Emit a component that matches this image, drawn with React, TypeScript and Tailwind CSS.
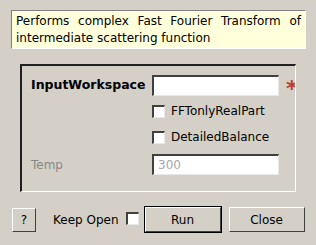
const sunken =
  "shrink-0 bg-white border-t-2 border-l-2 border-t-[#404040] border-l-[#404040] border-r border-b border-r-[#e8e8e8] border-b-[#e8e8e8]";
const raised =
  "shrink-0 border-t border-l border-white border-r border-b border-r-[#404040] border-b-[#404040] flex items-center justify-center";

function CheckRow({ label, className }: { label: string; className: string }) {
  return (
    <div className={`flex items-center h-[20px] ${className}`}>
      <div className="w-[121px] shrink-0" />
      <div className={`w-[13px] h-[13px] ${sunken}`} />
      <span className="ml-[6px]">{label}</span>
    </div>
  );
}

export default function App() {
  return (
    <div
      className="w-[316px] h-[245px] bg-[#d4d0c8] text-[12px] text-black flex flex-col pt-[10px] overflow-hidden"
      style={{ fontFamily: '"DejaVu Sans", sans-serif' }}
    >
      {/* description */}
      <div className="ml-[11px] w-[295px] h-[39px] bg-[#ffffdc] border-t border-l border-[#808080] border-r border-r-white border-b border-b-white px-[4px] pt-[2px] leading-[17px] text-justify">
        Performs complex Fast Fourier Transform of intermediate scattering function
      </div>

      {/* group box */}
      <div className="ml-[20px] mt-[15px] w-[276px] h-[128px] border-t-2 border-l-2 border-t-[#202020] border-l-[#202020] border-r border-b border-r-white border-b-white overflow-hidden flex flex-col pl-[9px] pt-[9px]">
        <div className="flex items-center h-[21px]">
          <span className="w-[121px] shrink-0 font-bold text-[12.5px]">InputWorkspace</span>
          <div className={`w-[127px] h-[21px] ${sunken}`} />
          <span className="ml-[7px] shrink-0 text-[#c0392b] text-[22px] font-bold leading-[20px] pt-[6px]">*</span>
        </div>
        <CheckRow label="FFTonlyRealPart" className="mt-[5px]" />
        <CheckRow label="DetailedBalance" className="mt-[6px]" />
        <div className="flex items-center h-[21px] mt-[7px]">
          <span className="w-[121px] shrink-0 text-[#8a8884]">Temp</span>
          <div className={`w-[127px] h-[21px] ${sunken} pl-[4px] flex items-center text-[#a8a8a8]`}>
            300
          </div>
        </div>
      </div>

      {/* bottom row */}
      <div className="mt-[14px] flex items-center h-[27px] pl-[12px]">
        <div className={`w-[24px] h-[24px] ${raised}`}>?</div>
        <span className="ml-[17px] shrink-0">Keep Open</span>
        <div className={`ml-[7px] w-[13px] h-[13px] -mt-[3px] ${sunken}`} />
        <div className="ml-[5px] shrink-0 w-[78px] h-[27px] border border-black">
          <div className={`w-full h-full ${raised}`}>Run</div>
        </div>
        <div className={`ml-[7px] w-[76px] h-[25px] ${raised}`}>Close</div>
      </div>
    </div>
  );
}
